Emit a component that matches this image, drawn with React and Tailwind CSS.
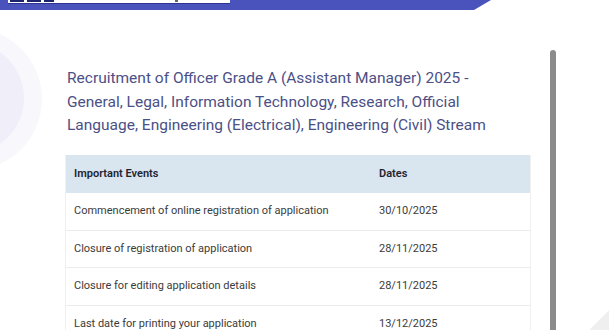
import React from 'react';

const events = [
  { name: 'Commencement of online registration of application', date: '30/10/2025' },
  { name: 'Closure of registration of application', date: '28/11/2025' },
  { name: 'Closure for editing application details', date: '28/11/2025' },
  { name: 'Last date for printing your application', date: '13/12/2025' },
];

const App = () => {
  return (
    <div className="relative w-[609px] h-[330px] overflow-hidden bg-white font-['Roboto','Liberation_Sans',sans-serif]">
      {/* background decorations */}
      <div className="absolute -left-[100px] top-[28px] w-[142px] h-[142px] rounded-full bg-[#f8f7fc]" />
      <div className="absolute -left-[88px] top-[42px] w-[112px] h-[112px] rounded-full bg-[#f0eef9]" />
      <div className="absolute right-[-14px] bottom-[-14px] w-[28px] h-[28px] rotate-45 bg-[#efefef]" />

      {/* top banner */}
      <div className="relative h-[10px] w-[491px] bg-[#4a52bb] [clip-path:polygon(0_0,100%_0,calc(100%-17px)_100%,0_100%)]">
        <div className="ml-[8px] flex h-[4px] w-[222px] items-start gap-[3px] border-b border-[#2d3590] bg-white px-[2px]">
          <span className="h-[2px] w-[14px] bg-[#1c2470]" />
          <span className="h-[2px] w-[14px] bg-[#1c2470]" />
          <span className="h-[2px] w-[10px] bg-[#1c2470]" />
          <span className="ml-[118px] h-[2px] w-[3px] bg-[#666]" />
        </div>
      </div>

      <div className="relative flex">
        <div className="ml-[65px] mt-[57px] w-[466px] shrink-0">
          <h1 className="ml-[2px] whitespace-nowrap text-[15.5px] leading-[23.5px] font-normal text-[#4b5086]">
            Recruitment of Officer Grade A (Assistant Manager) 2025 -<br />
            General, Legal, Information Technology, Research, Official<br />
            Language, Engineering (Electrical), Engineering (Civil) Stream
          </h1>

          <div className="mt-[17.5px] border-l border-r border-[#f0f0f0]">
            <div className="flex h-[38px] items-center bg-[#d9e5ef] text-[11px] font-semibold text-[#1f2430]">
              <div className="w-[313px] pl-[8px]">Important Events</div>
              <div>Dates</div>
            </div>
            {events.map((e) => (
              <div
                key={e.name}
                className="flex h-[37.5px] items-center border-b border-[#ececec] text-[11px] text-[#3b3b3b]"
              >
                <div className="w-[313px] pl-[8px]">{e.name}</div>
                <div>{e.date}</div>
              </div>
            ))}
          </div>
        </div>

        {/* scrollbar */}
        <div className="ml-[19px] mt-[40px] h-[300px] w-[6px] shrink-0 rounded-t-full bg-[#8b8b8b]" />
      </div>
    </div>
  );
};

export default App;
